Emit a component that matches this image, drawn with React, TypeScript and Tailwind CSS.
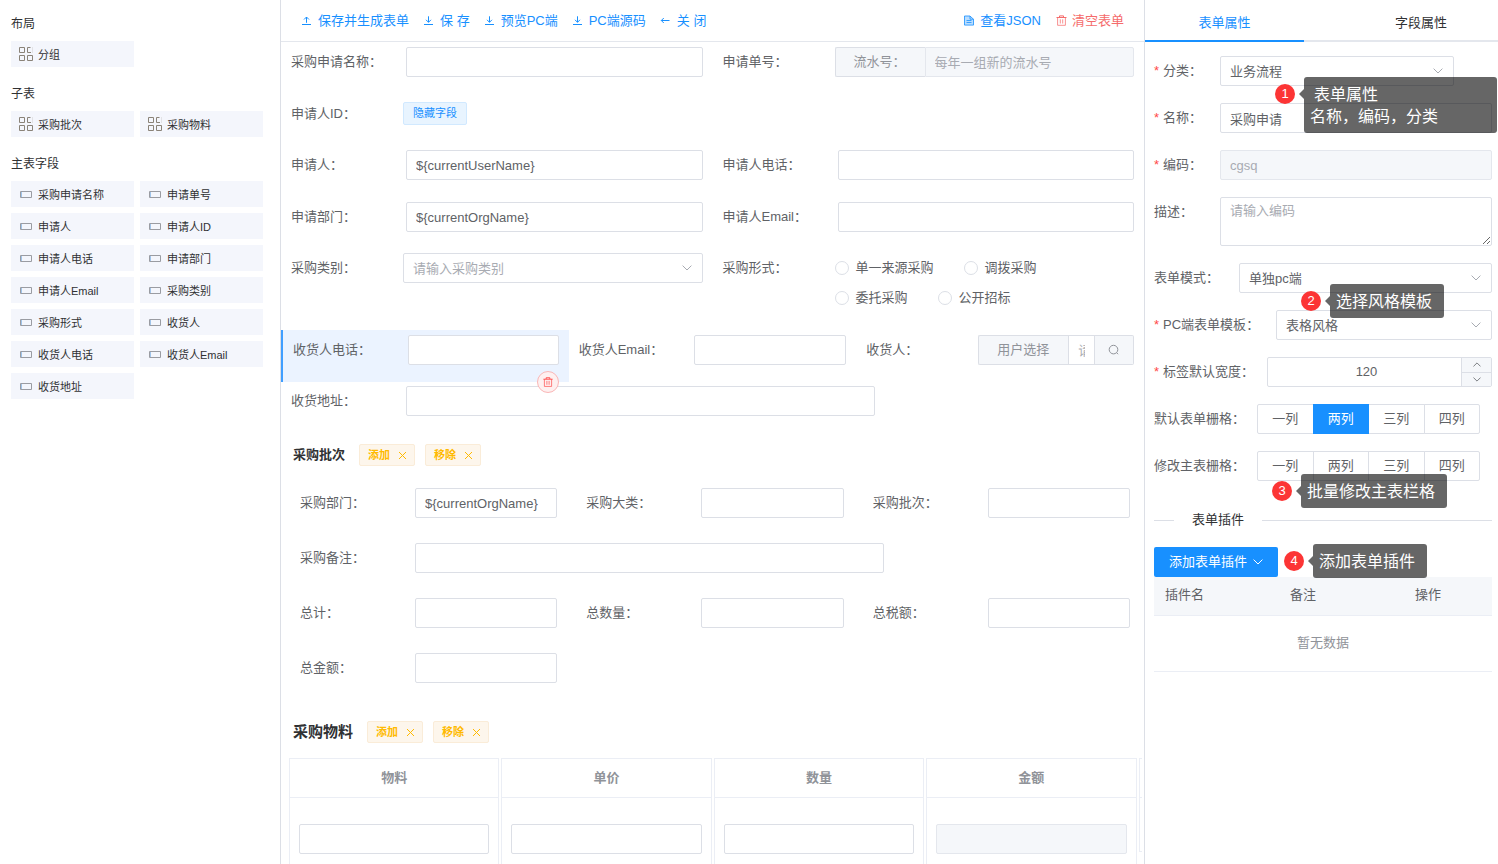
import React, { useState } from 'react';

const inputClass =
  'h-[30px] w-full min-w-0 rounded-[2px] border border-[#dcdfe6] bg-white px-[9px] text-[13px] text-[#606266] outline-none placeholder:text-[#a8abb2] focus:border-[#1890ff] disabled:border-[#e4e7ed] disabled:bg-[#f5f7fa] disabled:text-[#a8abb2]';

interface IconProps {
  className?: string;
}

const UploadIcon: React.FC<IconProps> = ({ className = 'size-[13px]' }) => (
  <svg viewBox="0 0 13 13" className={className} fill="none" stroke="currentColor" aria-hidden="true">
    <path d="M1 10.5h9M5.5 8.8V3M3 5.5L5.5 3 8 5.5" />
  </svg>
);

const DownloadIcon: React.FC<IconProps> = ({ className = 'size-[13px]' }) => (
  <svg viewBox="0 0 13 13" className={className} fill="none" stroke="currentColor" aria-hidden="true">
    <path d="M1 10.5h9M5.5 2.3v6M3 5.8l2.5 2.5L8 5.8" />
  </svg>
);

const BackIcon: React.FC<IconProps> = ({ className = 'size-[13px]' }) => (
  <svg viewBox="0 0 13 13" className={className} fill="none" stroke="currentColor" aria-hidden="true">
    <path d="M1.3 6.5h8.2M3.8 4L1.3 6.5 3.8 9" />
  </svg>
);

const DocumentIcon: React.FC<IconProps> = ({ className = 'size-[13px]' }) => (
  <svg viewBox="0 0 13 13" className={className} fill="none" stroke="currentColor" aria-hidden="true">
    <path d="M1.5 2h5.4l3.6 3.2v5.9h-9z" fill="currentColor" fillOpacity="0.3" strokeOpacity="0.8" />
    <path d="M7 2v3.2h3.5M3.5 6.5h5M3.5 8.5h5" strokeWidth="0.8" />
  </svg>
);

const TrashIcon: React.FC<IconProps> = ({ className = 'size-[13px]' }) => (
  <svg viewBox="0 0 13 13" className={className} fill="none" stroke="currentColor" aria-hidden="true">
    <path d="M1.5 3.5h10M4.5 3.3V1.9h4v1.4" />
    <path d="M2.6 3.5v7.8h7.8V3.5M5.3 5.3v4.2M7.7 5.3v4.2" strokeOpacity="0.75" />
  </svg>
);

const SearchIcon: React.FC<IconProps> = ({ className = 'size-[13px]' }) => (
  <svg viewBox="0 0 13 13" className={className} fill="none" stroke="currentColor" aria-hidden="true">
    <circle cx="6.5" cy="5.6" r="4.3" />
    <path d="M9.5 8.6l1.6 1.6" />
  </svg>
);

const ChevronIcon: React.FC<IconProps> = ({ className = 'h-[6px] w-[10px]' }) => (
  <svg viewBox="0 0 10 6" className={className} fill="none" stroke="currentColor" aria-hidden="true">
    <path d="M0.6 0.6L5 5l4.4-4.4" />
  </svg>
);

const CloseIcon: React.FC<IconProps> = ({ className = 'size-[9px]' }) => (
  <svg viewBox="0 0 9 9" className={className} fill="none" stroke="currentColor" aria-hidden="true">
    <path d="M1 1l7 7M8 1L1 8" />
  </svg>
);

const GroupIcon: React.FC = () => (
  <svg viewBox="0 0 14 14" className="size-[14px] text-[#8a8378]" fill="none" stroke="currentColor" aria-hidden="true">
    <path d="M0.5 0.5h5v5h-5zM0.5 8.5h5v5h-5zM8.5 8.5h5v5h-5z" />
    <path d="M11.5 0.5h-3v5h3.5" />
    <path d="M13.5 0.5v5" strokeOpacity="0.35" strokeDasharray="1 1" />
  </svg>
);

const FieldIcon: React.FC = () => (
  <svg viewBox="0 0 14 14" className="size-[14px] text-[#9a9ca2]" fill="none" stroke="currentColor" aria-hidden="true">
    <path d="M1.5 4.5h11v6h-11z" />
    <path d="M2.5 5v5" stroke="#9fc4ea" />
  </svg>
);

interface PaletteSectionProps {
  title: string;
  items: string[];
  group?: boolean;
}

const PaletteSection: React.FC<PaletteSectionProps> = ({ title, items, group }) => (
  <section className="mb-[17px]">
    <h2 className="mb-[7px] text-[12px] leading-5 text-[#303133]">{title}</h2>
    <ul className="grid grid-cols-2 gap-[6px]">
      {items.map((item) => (
        <li key={item} className="flex h-[26px] cursor-move items-center gap-[5px] bg-[#f4f6fc] px-2 text-[11px] text-[#303133]">
          {group ? <GroupIcon /> : <FieldIcon />}
          <span className="pt-px">{item}</span>
        </li>
      ))}
    </ul>
  </section>
);

interface ToolButtonProps {
  icon: React.ReactNode;
  label: string;
  danger?: boolean;
}

const ToolButton: React.FC<ToolButtonProps> = ({ icon, label, danger }) => (
  <button
    type="button"
    className={`flex cursor-pointer items-center gap-1 whitespace-nowrap ${danger ? 'text-[#f56c6c]' : 'text-[#1890ff]'}`}
  >
    {icon}
    {label}
  </button>
);

interface FieldProps {
  id: string;
  label: string;
  children?: React.ReactNode;
  className?: string;
}

const Field: React.FC<FieldProps> = ({ id, label, children, className = 'px-[10px] pt-[5px]' }) => (
  <div className={`flex min-w-0 items-start ${className}`}>
    <label htmlFor={id} className="w-[112px] shrink-0 leading-[30px]">
      {label}：
    </label>
    <div className="min-w-0 flex-1">{children}</div>
  </div>
);

interface TextFieldProps {
  id: string;
  label: string;
  value?: string;
  className?: string;
}

const TextField: React.FC<TextFieldProps> = ({ id, label, value = '', className }) => (
  <Field id={id} label={label} className={className}>
    <div className="flex pl-[3px]">
      <input id={id} type="text" defaultValue={value} className={inputClass} />
    </div>
  </Field>
);

interface SelectBoxProps {
  id: string;
  options: string[];
  placeholder?: boolean;
}

const SelectBox: React.FC<SelectBoxProps> = ({ id, options, placeholder }) => (
  <div className="relative flex items-center">
    <select
      id={id}
      className={`h-[30px] w-full appearance-none rounded-[2px] border border-[#dcdfe6] bg-white px-[9px] pt-[2px] text-[13px] outline-none ${
        placeholder ? 'text-[#a8abb2]' : 'text-[#606266]'
      }`}
    >
      {options.map((option) => (
        <option key={option}>{option}</option>
      ))}
    </select>
    <span className="pointer-events-none absolute right-[11px] text-[#a8abb2]">
      <ChevronIcon />
    </span>
  </div>
);

const ActionTag: React.FC<{ label: string }> = ({ label }) => (
  <button
    type="button"
    className="flex h-[22px] cursor-pointer items-center gap-2 rounded-[2px] border border-[#faecd8] bg-[#fdf6ec] pr-[7px] pl-2 text-[11px] font-bold text-[#ffba00]"
  >
    {label}
    <CloseIcon />
  </button>
);

interface PropertyRowProps {
  id: string;
  label: string;
  labelWidth: string;
  required?: boolean;
  children?: React.ReactNode;
}

const PropertyRow: React.FC<PropertyRowProps> = ({ id, label, labelWidth, required, children }) => (
  <div className="mb-[17px] flex items-start">
    <label htmlFor={id} className={`shrink-0 leading-[30px] whitespace-nowrap ${labelWidth}`}>
      {required && <span className="mr-1 text-[#ff4949]">*</span>}
      {label}：
    </label>
    <div className="min-w-0 flex-1">{children}</div>
  </div>
);

const columns = ['一列', '两列', '三列', '四列'];

interface ColumnPickerProps {
  id: string;
  initial?: string;
}

const ColumnPicker: React.FC<ColumnPickerProps> = ({ id, initial = '' }) => {
  const [selected, setSelected] = useState(initial);

  return (
    <div id={id} role="radiogroup" className="mr-3 flex">
      {columns.map((column) => (
        <label
          key={column}
          className={`relative -ml-px flex h-[30px] flex-1 cursor-pointer items-center justify-center border first:ml-0 first:rounded-l-[2px] last:rounded-r-[2px] ${
            selected === column ? 'z-10 border-[#1890ff] bg-[#1890ff] text-white' : 'border-[#dcdfe6] bg-white'
          }`}
        >
          <input
            type="radio"
            name={id}
            value={column}
            checked={selected === column}
            onChange={() => setSelected(column)}
            className="sr-only"
          />
          {column}
        </label>
      ))}
    </div>
  );
};

interface CalloutProps {
  step: number;
  position: string;
  box?: string;
  children?: React.ReactNode;
}

const Callout: React.FC<CalloutProps> = ({ step, position, box = 'h-[34px] pr-3 pl-[6px] leading-9', children }) => (
  <div className={`absolute z-20 flex items-start ${position}`}>
    <span className="mt-[7px] flex size-5 items-center justify-center rounded-full bg-[#fc3535] text-[13px] text-white">
      {step}
    </span>
    <svg viewBox="0 0 5 10" className="mt-3 ml-1 h-[10px] w-[5px] text-black/60" fill="currentColor" aria-hidden="true">
      <path d="M5 0v10L0 5z" />
    </svg>
    <div className={`rounded-[3px] bg-black/60 text-[16px] whitespace-nowrap text-white ${box}`}>{children}</div>
  </div>
);

const mainFields = [
  '采购申请名称', '申请单号', '申请人', '申请人ID', '申请人电话', '申请部门', '申请人Email',
  '采购类别', '采购形式', '收货人', '收货人电话', '收货人Email', '收货地址',
];

const purchaseModes = ['单一来源采购', '调拨采购', '委托采购', '公开招标'];

const Toolbar: React.FC = () => (
  <header className="flex h-[42px] shrink-0 items-center justify-between border-b border-[#e4e7ed] px-5">
    <div className="flex gap-[14px]">
      <ToolButton icon={<UploadIcon />} label="保存并生成表单" />
      <ToolButton icon={<DownloadIcon />} label="保 存" />
      <ToolButton icon={<DownloadIcon />} label="预览PC端" />
      <ToolButton icon={<DownloadIcon />} label="PC端源码" />
      <ToolButton icon={<BackIcon />} label="关 闭" />
    </div>
    <div className="flex gap-[14px]">
      <ToolButton icon={<DocumentIcon />} label="查看JSON" />
      <ToolButton icon={<TrashIcon />} label="清空表单" danger />
    </div>
  </header>
);

const MainForm: React.FC = () => (
  <div>
    <div className="grid h-[52px] grid-cols-2">
      <TextField id="name" label="采购申请名称" />
      <Field id="serial" label="申请单号">
        <div className="flex">
          <span className="h-[30px] w-[90px] shrink-0 rounded-l-[2px] border border-r-0 border-[#dcdfe6] bg-[#f5f7fa] pl-[18px] leading-7 text-[#909399]">
            流水号：
          </span>
          <input id="serial" disabled placeholder="每年一组新的流水号" className={`${inputClass} rounded-l-none`} />
        </div>
      </Field>
    </div>
    <div className="grid h-[51px] grid-cols-2">
      <Field id="applicant-id" label="申请人ID">
        <div className="flex h-7 items-center">
          <output
            id="applicant-id"
            className="flex h-[23px] items-center rounded-[2px] border border-[#d1e9ff] bg-[#e8f4ff] px-[9px] text-[11px] text-[#1890ff]"
          >
            隐藏字段
          </output>
        </div>
      </Field>
    </div>
    <div className="grid h-[52px] grid-cols-2">
      <TextField id="applicant" label="申请人" value="${currentUserName}" />
      <TextField id="applicant-phone" label="申请人电话" />
    </div>
    <div className="grid h-[51px] grid-cols-2">
      <TextField id="department" label="申请部门" value="${currentOrgName}" />
      <TextField id="applicant-email" label="申请人Email" />
    </div>
    <div className="grid h-[82px] grid-cols-2">
      <Field id="category" label="采购类别">
        <SelectBox id="category" options={['请输入采购类别']} placeholder />
      </Field>
      <Field id="mode" label="采购形式">
        <div id="mode" role="radiogroup" className="flex flex-wrap">
          {purchaseModes.map((mode) => (
            <label key={mode} className="mr-[30px] flex h-[30px] items-center gap-[7px]">
              <input
                type="radio"
                name="mode"
                className="size-[14px] appearance-none rounded-full border border-[#dcdfe6] bg-white checked:border-4 checked:border-[#1890ff]"
              />
              {mode}
            </label>
          ))}
        </div>
      </Field>
    </div>
    <div className="grid h-[52px] grid-cols-3">
      <div className="relative border-l-2 border-[#409eff] bg-[#ebf3ff]">
        <TextField id="receiver-phone" label="收货人电话" />
        <button
          type="button"
          aria-label="删除"
          className="absolute right-[10px] -bottom-[11px] z-10 flex size-[22px] cursor-pointer items-center justify-center rounded-full border border-[#fab6b6] bg-[#fef0f0] text-[#ff4949]"
        >
          <TrashIcon className="size-3" />
        </button>
      </div>
      <TextField id="receiver-email" label="收货人Email" />
      <Field id="receiver" label="收货人">
        <div className="flex">
          <span className="h-[30px] w-[90px] shrink-0 rounded-l-[2px] border border-r-0 border-[#dcdfe6] bg-[#f5f7fa] pl-[18px] leading-7 text-[#909399]">
            用户选择
          </span>
          <input id="receiver" type="text" placeholder="请选择" className={`${inputClass} rounded-none`} />
          <button
            type="button"
            aria-label="搜索"
            className="flex h-[30px] w-[39px] shrink-0 cursor-pointer items-center justify-center rounded-r-[2px] border border-l-0 border-[#dcdfe6] bg-[#f5f7fa] text-[#909399]"
          >
            <SearchIcon />
          </button>
        </div>
      </Field>
    </div>
    <div className="h-[52px] w-[70%]">
      <TextField id="address" label="收货地址" className="px-[10px] pt-1" />
    </div>
  </div>
);

const BatchForm: React.FC = () => (
  <section className="mt-[10px]">
    <div className="flex items-center gap-[10px] pl-3">
      <h3 className="mr-1 text-[13px] font-bold text-[#303133]">采购批次</h3>
      <ActionTag label="添加" />
      <ActionTag label="移除" />
    </div>
    <div className="mt-[22px] grid grid-cols-3 gap-x-[29px] gap-y-[25px] pr-[14px] pl-[19px]">
      <TextField id="batch-dept" label="采购部门" value="${currentOrgName}" className="" />
      <TextField id="batch-kind" label="采购大类" className="" />
      <TextField id="batch-no" label="采购批次" className="" />
      <div className="col-span-3 w-[calc(70%+3px)]">
        <TextField id="batch-remark" label="采购备注" className="" />
      </div>
      <TextField id="batch-total" label="总计" className="" />
      <TextField id="batch-count" label="总数量" className="" />
      <TextField id="batch-tax" label="总税额" className="" />
      <TextField id="batch-amount" label="总金额" className="" />
    </div>
  </section>
);

const MaterialTable: React.FC = () => (
  <section className="mt-[38px]">
    <div className="flex items-center gap-[10px] pl-3">
      <h3 className="mr-1 text-[15px] leading-[22px] font-bold text-[#303133]">采购物料</h3>
      <ActionTag label="添加" />
      <ActionTag label="移除" />
    </div>
    <div className="mt-[15px] ml-[6px] overflow-hidden">
      <table className="w-full table-fixed border-separate border-spacing-x-[2px] border-spacing-y-0">
        <thead>
          <tr className="h-10 text-[#909399]">
            {['物料', '单价', '数量', '金额'].map((title) => (
              <th key={title} className="w-[24.9%] border border-[#ebeef5] font-bold">
                {title}
              </th>
            ))}
            <th className="border-y border-l border-[#ebeef5] p-0" />
          </tr>
        </thead>
        <tbody>
          <tr className="h-20">
            {['物料', '单价', '数量', '金额'].map((title) => (
              <td key={title} className="border-x border-b border-[#ebeef5] px-[9px] pt-[26px] pb-6">
                <input type="text" aria-label={title} disabled={title === '金额'} className={`${inputClass} block`} />
              </td>
            ))}
            <td className="p-0 align-top">
              <div className="h-[54px] border-b border-l border-[#ebeef5]" />
            </td>
          </tr>
        </tbody>
      </table>
    </div>
  </section>
);

const PropertyPanel: React.FC = () => {
  const [width, setWidth] = useState(120);

  return (
    <aside className="relative w-[354px] shrink-0 overflow-hidden border-l border-[#dcdfe6]">
      <div role="tablist" className="flex h-[42px]">
        <button
          type="button"
          role="tab"
          aria-selected="true"
          className="w-[45%] cursor-pointer border-b-2 border-[#1890ff] pt-[6px] text-[#1890ff]"
        >
          表单属性
        </button>
        <button
          type="button"
          role="tab"
          aria-selected="false"
          className="flex-1 cursor-pointer border-b-2 border-[#e4e7ed] pt-[6px] pl-10 text-[#303133]"
        >
          字段属性
        </button>
      </div>

      <div className="pt-[14px] pr-[6px] pl-[9px]">
        <PropertyRow id="form-type" label="分类" labelWidth="w-[66px]" required>
          <div className="pr-[38px]">
            <SelectBox id="form-type" options={['业务流程']} />
          </div>
        </PropertyRow>
        <PropertyRow id="form-name" label="名称" labelWidth="w-[66px]" required>
          <input id="form-name" type="text" defaultValue="采购申请" className={`${inputClass} block`} />
        </PropertyRow>
        <PropertyRow id="form-code" label="编码" labelWidth="w-[66px]" required>
          <input id="form-code" type="text" defaultValue="cgsq" disabled className={`${inputClass} block`} />
        </PropertyRow>
        <PropertyRow id="form-desc" label="描述" labelWidth="w-[66px]">
          <textarea
            id="form-desc"
            placeholder="请输入编码"
            className="block h-[49px] w-full resize-y rounded-[2px] border border-[#dcdfe6] px-[9px] py-[3px] text-[13px] leading-5 outline-none placeholder:text-[#a8abb2]"
          />
        </PropertyRow>
        <PropertyRow id="form-mode" label="表单模式" labelWidth="w-[85px]">
          <SelectBox id="form-mode" options={['单独pc端']} />
        </PropertyRow>
        <PropertyRow id="form-template" label="PC端表单模板" labelWidth="w-[122px]" required>
          <SelectBox id="form-template" options={['表格风格']} />
        </PropertyRow>
        <PropertyRow id="label-width" label="标签默认宽度" labelWidth="w-[113px]" required>
          <div className="flex h-[30px] overflow-hidden rounded-[2px] border border-[#dcdfe6]">
            <input
              id="label-width"
              type="text"
              value={width}
              onChange={(e) => setWidth(Number(e.target.value) || 0)}
              className="min-w-0 flex-1 pr-1 pl-2 text-center text-[13px] text-[#606266] outline-none"
            />
            <div className="flex w-[30px] flex-col border-l border-[#dcdfe6] bg-[#f5f7fa]">
              <button
                type="button"
                aria-label="增加"
                onClick={() => setWidth(width + 1)}
                className="flex flex-1 items-center justify-center border-b border-[#dcdfe6]"
              >
                <ChevronIcon className="h-[5px] w-2 rotate-180" />
              </button>
              <button
                type="button"
                aria-label="减少"
                onClick={() => setWidth(width - 1)}
                className="flex flex-1 items-center justify-center"
              >
                <ChevronIcon className="h-[5px] w-2" />
              </button>
            </div>
          </div>
        </PropertyRow>
        <PropertyRow id="default-grid" label="默认表单栅格" labelWidth="w-[103px]">
          <ColumnPicker id="default-grid" initial="两列" />
        </PropertyRow>
        <PropertyRow id="main-grid" label="修改主表栅格" labelWidth="w-[103px]">
          <ColumnPicker id="main-grid" />
        </PropertyRow>

        <div className="mt-[29px] flex h-5 items-center">
          <span className="h-px w-5 bg-[#dcdfe6]" />
          <span className="px-[18px] text-[#303133]">表单插件</span>
          <span className="h-px flex-1 bg-[#dcdfe6]" />
        </div>

        <button
          type="button"
          className="mt-[17px] flex h-[30px] cursor-pointer items-center gap-[6px] rounded-[2px] bg-[#1890ff] px-[15px] text-white"
        >
          添加表单插件
          <ChevronIcon className="h-[6px] w-[10px]" />
        </button>
        <table className="w-full table-fixed text-left">
          <thead>
            <tr className="h-[38px] bg-[#f5f7fa]">
              <th className="w-[37%] border-b border-[#ebeef5] px-[11px] pb-[2px] font-normal">插件名</th>
              <th className="w-[37%] border-b border-[#ebeef5] px-[11px] pb-[2px] font-normal">备注</th>
              <th className="border-b border-[#ebeef5] px-[11px] pb-[2px] font-normal">操作</th>
            </tr>
          </thead>
          <tbody>
            <tr className="h-14">
              <td colSpan={3} className="border-b border-[#ebeef5] text-center text-[#909399]">
                暂无数据
              </td>
            </tr>
          </tbody>
        </table>
      </div>

      <Callout step={1} position="left-[130px] top-[77px]" box="h-14 w-[193px] pt-[7px] pl-[6px] leading-[22px]">
        <p className="pl-1">表单属性</p>
        <p>名称，编码，分类</p>
      </Callout>
      <Callout step={2} position="left-[156px] top-[284px]">选择风格模板</Callout>
      <Callout step={3} position="left-[127px] top-[474px]">批量修改主表栏格</Callout>
      <Callout step={4} position="left-[139px] top-[544px]">添加表单插件</Callout>
    </aside>
  );
};

const App: React.FC = () => (
  <div
    lang="zh-CN"
    className="flex h-screen overflow-hidden bg-white font-['Liberation_Sans','Noto_Sans_CJK_SC',sans-serif] text-[13px] leading-5 text-[#606266]"
  >
    <nav className="w-[280px] shrink-0 overflow-hidden pt-[14px] pr-[17px] pl-[11px]">
      <PaletteSection title="布局" items={['分组']} group />
      <PaletteSection title="子表" items={['采购批次', '采购物料']} group />
      <PaletteSection title="主表字段" items={mainFields} />
    </nav>
    <main className="flex min-w-0 flex-1 flex-col overflow-hidden border-l border-[#dcdfe6]">
      <Toolbar />
      <div className="min-h-0 flex-1 overflow-hidden">
        <MainForm />
        <BatchForm />
        <MaterialTable />
      </div>
    </main>
    <PropertyPanel />
  </div>
);

export default App;
